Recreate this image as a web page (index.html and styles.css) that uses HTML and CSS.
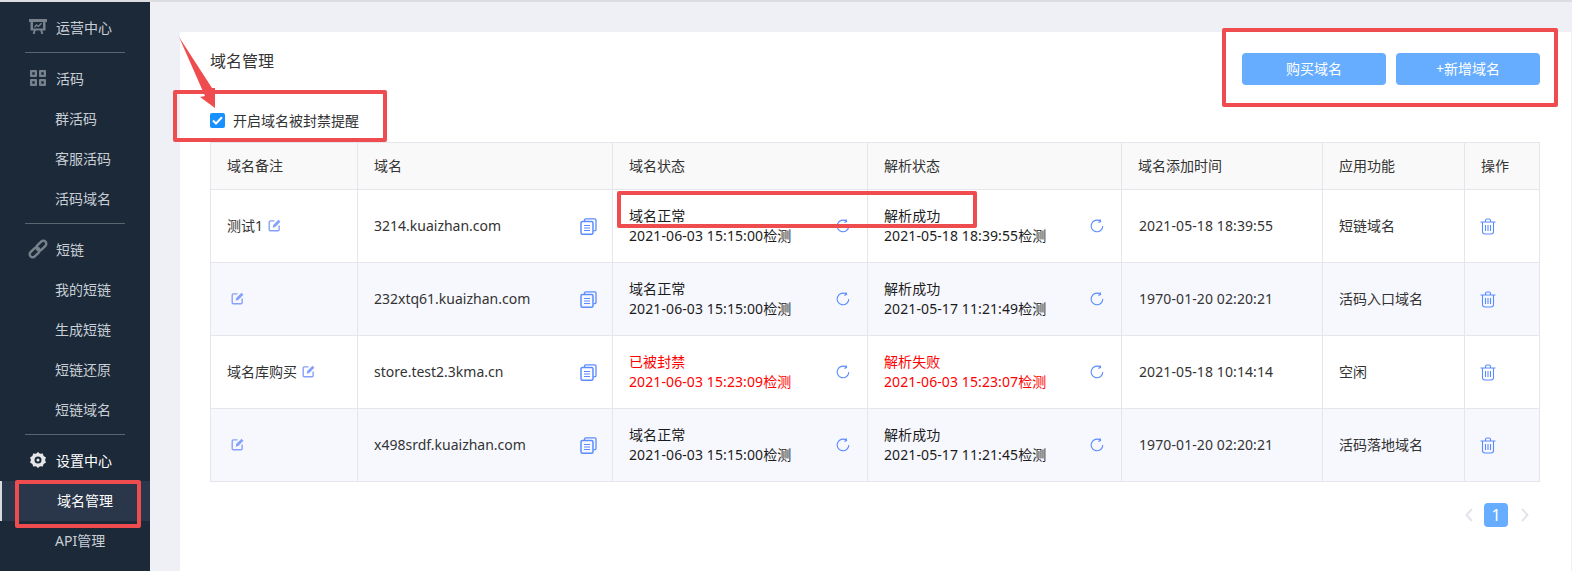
FILE: index.html
```html
<!DOCTYPE html>
<html lang="zh-CN">
<head>
<meta charset="utf-8">
<title>域名管理</title>
<link rel="stylesheet" href="styles.css">
</head>
<body>

<svg width="0" height="0" class="defs">
  <symbol id="i-edit" viewBox="0 0 14 14">
    <path d="M7 2H2.500A1.200 1.200 0 0 0 1.300 3.200V11.500A1.200 1.200 0 0 0 2.500 12.700H10.800A1.200 1.200 0 0 0 12 11.500V7" fill="none" stroke="currentColor" stroke-width="1.500"/>
    <path d="M5 9.300L5.600 6.400L11.300 .9L13.400 3L7.800 8.700Z" fill="currentColor"/>
  </symbol>
  <symbol id="i-copy" viewBox="0 0 17 17">
    <path d="M4.500 3V2A1.200 1.200 0 0 1 5.700 .8H14.800A1.200 1.200 0 0 1 16 2V11.500A1.200 1.200 0 0 1 14.800 12.700H13.500" fill="none" stroke="currentColor" stroke-width="1.300"/>
    <rect x="1" y="3.500" width="12" height="12.700" rx="1.500" fill="none" stroke="currentColor" stroke-width="1.500"/>
    <path d="M4 7.500H10M4 10H10M4 12.500H10" stroke="currentColor" stroke-width="1.200"/>
  </symbol>
  <symbol id="i-refresh" viewBox="0 0 14 14">
    <path d="M12.800 7A5.800 5.800 0 1 1 10.300 2.200" fill="none" stroke="currentColor" stroke-width="1.100"/>
    <path d="M9.800 .3L10.600 2.500L8.400 3.600" fill="none" stroke="currentColor" stroke-width="1.100"/>
  </symbol>
  <symbol id="i-trash" viewBox="0 0 16 17">
    <path d="M.5 4H15.500M5.500 4V2.500A1.500 1.500 0 0 1 7 1H9A1.500 1.500 0 0 1 10.500 2.500V4" fill="none" stroke="currentColor" stroke-width="1.100"/>
    <path d="M2.500 4V13.500A2.500 2.500 0 0 0 5 16H11A2.500 2.500 0 0 0 13.500 13.500V4" fill="none" stroke="currentColor" stroke-width="1.100"/>
    <path d="M5.500 7V13M8 7V13M10.500 7V13" stroke="currentColor" stroke-width="1.100"/>
  </symbol>
</svg>

<div class="topline"></div>

<div class="layout">
  <div class="sidebar">
    <div class="nav-head">
      <svg class="nav-icon" viewBox="0 0 16 16"><path d="M-1 0H17V3H15.500V11.500H12.300L13.300 15H11.300L10.300 11.500H5.700L4.700 15H2.700L3.700 11.500H.5V3H-1ZM3 3V9.500H13V3ZM4 8L6.300 5L8.300 6.500L11 3.800L12 4.800L8.500 8.300L6.600 6.900L5.200 8.800Z" fill-rule="evenodd"/></svg>
      运营中心
    </div>
    <div class="nav-line"></div>
    <div class="nav-head">
      <svg class="nav-icon" viewBox="0 0 16 16"><path d="M1 0H6A1 1 0 0 1 7 1V6A1 1 0 0 1 6 7H1A1 1 0 0 1 0 6V1A1 1 0 0 1 1 0ZM2.300 2.300V4.700H4.700V2.300ZM10 0H15A1 1 0 0 1 16 1V6A1 1 0 0 1 15 7H10A1 1 0 0 1 9 6V1A1 1 0 0 1 10 0ZM11.300 2.300V4.700H13.700V2.300ZM1 9H6A1 1 0 0 1 7 10V15A1 1 0 0 1 6 16H1A1 1 0 0 1 0 15V10A1 1 0 0 1 1 9ZM2.300 11.300V13.700H4.700V11.300ZM10 9H15A1 1 0 0 1 16 10V15A1 1 0 0 1 15 16H10A1 1 0 0 1 9 15V10A1 1 0 0 1 10 9ZM11.300 11.300V13.700H13.700V11.300Z" fill-rule="evenodd"/></svg>
      活码
    </div>
    <div class="nav-item">群活码</div>
    <div class="nav-item">客服活码</div>
    <div class="nav-item">活码域名</div>
    <div class="nav-line"></div>
    <div class="nav-head">
      <svg class="nav-icon" viewBox="0 0 16 16"><g transform="rotate(-45 8 8)" fill="none" stroke="#78828d" stroke-width="2.400"><rect x="-2.500" y="5" width="11.500" height="6" rx="3"/><rect x="7" y="5" width="11.500" height="6" rx="3"/></g></svg>
      短链
    </div>
    <div class="nav-item">我的短链</div>
    <div class="nav-item">生成短链</div>
    <div class="nav-item">短链还原</div>
    <div class="nav-item">短链域名</div>
    <div class="nav-line"></div>
    <div class="nav-head open">
      <svg class="nav-icon" viewBox="0 0 16 16"><path d="M8 0L10 1.800L12.800 1.400L13.600 4.100L16 5.500L15 8L16 10.500L13.600 11.900L12.800 14.600L10 14.200L8 16L6 14.200L3.200 14.600L2.400 11.900L0 10.500L1 8L0 5.500L2.400 4.100L3.200 1.400L6 1.800ZM8 4.500A3.500 3.500 0 1 0 8 11.500A3.500 3.500 0 1 0 8 4.500ZM8 6.500A1.500 1.500 0 1 1 8 9.500A1.500 1.500 0 1 1 8 6.500Z" fill-rule="evenodd"/></svg>
      设置中心
    </div>
    <div class="nav-item active">域名管理</div>
    <div class="nav-item">API管理</div>
  </div>

  <div class="main">
    <div class="card">
      <div class="card-head">
        <div class="title">域名管理</div>
        <div class="btns">
          <div class="btn">购买域名</div>
          <div class="btn">+新增域名</div>
        </div>
      </div>

      <div class="check-row">
        <span class="check"><svg width="11" height="9" viewBox="0 0 11 9"><path d="M1 4.500L4 7.500L10 1.300" fill="none" stroke="#fff" stroke-width="2"/></svg></span>
        开启域名被封禁提醒
      </div>

      <table class="domains">
        <colgroup>
          <col class="c-note"><col class="c-name"><col class="c-status"><col class="c-parse"><col class="c-time"><col class="c-use"><col class="c-op">
        </colgroup>
        <tr>
          <th>域名备注</th><th>域名</th><th>域名状态</th><th>解析状态</th><th>域名添加时间</th><th>应用功能</th><th>操作</th>
        </tr>
        <tr>
          <td>测试1<svg class="ico edit"><use href="#i-edit"/></svg></td>
          <td><div class="cell">3214.kuaizhan.com<svg class="ico copy"><use href="#i-copy"/></svg></div></td>
          <td><div class="cell"><div class="state">域名正常<br>2021-06-03 15:15:00检测</div><svg class="ico refresh"><use href="#i-refresh"/></svg></div></td>
          <td><div class="cell"><div class="state">解析成功<br>2021-05-18 18:39:55检测</div><svg class="ico refresh"><use href="#i-refresh"/></svg></div></td>
          <td class="date">2021-05-18 18:39:55</td>
          <td>短链域名</td>
          <td class="op"><svg class="ico trash"><use href="#i-trash"/></svg></td>
        </tr>
        <tr class="alt">
          <td><svg class="ico edit solo"><use href="#i-edit"/></svg></td>
          <td><div class="cell">232xtq61.kuaizhan.com<svg class="ico copy"><use href="#i-copy"/></svg></div></td>
          <td><div class="cell"><div class="state">域名正常<br>2021-06-03 15:15:00检测</div><svg class="ico refresh"><use href="#i-refresh"/></svg></div></td>
          <td><div class="cell"><div class="state">解析成功<br>2021-05-17 11:21:49检测</div><svg class="ico refresh"><use href="#i-refresh"/></svg></div></td>
          <td class="date">1970-01-20 02:20:21</td>
          <td>活码入口域名</td>
          <td class="op"><svg class="ico trash"><use href="#i-trash"/></svg></td>
        </tr>
        <tr>
          <td>域名库购买<svg class="ico edit"><use href="#i-edit"/></svg></td>
          <td><div class="cell">store.test2.3kma.cn<svg class="ico copy"><use href="#i-copy"/></svg></div></td>
          <td><div class="cell"><div class="state bad">已被封禁<br>2021-06-03 15:23:09检测</div><svg class="ico refresh"><use href="#i-refresh"/></svg></div></td>
          <td><div class="cell"><div class="state bad">解析失败<br>2021-06-03 15:23:07检测</div><svg class="ico refresh"><use href="#i-refresh"/></svg></div></td>
          <td class="date">2021-05-18 10:14:14</td>
          <td>空闲</td>
          <td class="op"><svg class="ico trash"><use href="#i-trash"/></svg></td>
        </tr>
        <tr class="alt">
          <td><svg class="ico edit solo"><use href="#i-edit"/></svg></td>
          <td><div class="cell">x498srdf.kuaizhan.com<svg class="ico copy"><use href="#i-copy"/></svg></div></td>
          <td><div class="cell"><div class="state">域名正常<br>2021-06-03 15:15:00检测</div><svg class="ico refresh"><use href="#i-refresh"/></svg></div></td>
          <td><div class="cell"><div class="state">解析成功<br>2021-05-17 11:21:45检测</div><svg class="ico refresh"><use href="#i-refresh"/></svg></div></td>
          <td class="date">1970-01-20 02:20:21</td>
          <td>活码落地域名</td>
          <td class="op"><svg class="ico trash"><use href="#i-trash"/></svg></td>
        </tr>
      </table>

      <div class="pager">
        <svg class="chev" viewBox="0 0 8 14"><path d="M7 1L1.500 7L7 13" fill="none" stroke="currentColor" stroke-width="2"/></svg>
        <div class="page-no">1</div>
        <svg class="chev" viewBox="0 0 8 14"><path d="M1 1L6.500 7L1 13" fill="none" stroke="currentColor" stroke-width="2"/></svg>
      </div>
    </div>
  </div>
</div>

<!-- red marks drawn over the screenshot -->
<div class="mark mark-check"></div>
<div class="mark mark-btns"></div>
<div class="mark mark-status"></div>
<div class="mark mark-nav"></div>
<svg class="arrow" viewBox="0 0 50 80"><path d="M1 1L34 52L37 52L37 72L22 61L27 60Z" fill="#ef4c4f"/></svg>

</body>
</html>
```

FILE: styles.css
```css
* {
  box-sizing: border-box;
}

html, body {
  height: 100%;
}

body {
  margin: 0;
  overflow: hidden;
  background: #eff0f5;
  color: #333;
  font-family: "Noto Sans", "Noto Sans CJK SC", sans-serif;
  font-size: 14px;
}

.defs {
  position: absolute;
}

.topline {
  height: 2px;
  background: #dcdde0;
}

.layout {
  display: flex;
  height: 569px;
}

/* sidebar */
.sidebar {
  width: 150px;
  flex: none;
  padding-top: 6px;
  background: #1c2938;
  color: #c8ced6;
}

.nav-head {
  display: flex;
  align-items: center;
  height: 40px;
  padding: 0 0 2px 30px;
}

.nav-head.open {
  color: #fff;
}

.nav-icon {
  width: 16px;
  height: 16px;
  margin-right: 10px;
  overflow: visible;
  fill: #78828d;
}

.open .nav-icon {
  fill: #e4e6e9;
}

.nav-line {
  height: 1px;
  margin: 4px 25px 6px;
  background: #5b6570;
}

.nav-item {
  height: 40px;
  line-height: 40px;
  padding-left: 55px;
}

.nav-item.active {
  border-left: 2px solid #d9dadc;
  background: #2a3649;
  color: #fff;
}

/* main */
.main {
  flex: 1;
  padding: 30px 2px 0 30px;
}

.card {
  height: 100%;
  padding: 21px 31px 0 30px;
  background: #fff;
}

.card-head {
  display: flex;
  justify-content: space-between;
  align-items: flex-start;
}

.title {
  font-size: 16px;
  line-height: 16px;
}

.btns {
  display: flex;
  gap: 10px;
}

.btn {
  width: 144px;
  height: 32px;
  line-height: 32px;
  border-radius: 4px;
  background: #66adff;
  color: #fff;
  text-align: center;
}

.check-row {
  display: flex;
  align-items: center;
  height: 20px;
  margin: 25px 0 12px;
}

.check {
  display: flex;
  align-items: center;
  justify-content: center;
  width: 15px;
  height: 15px;
  margin-right: 8px;
  border-radius: 2px;
  background: #1890ff;
}

/* table */
.domains {
  width: 1329px;
  table-layout: fixed;
  border-collapse: collapse;
}

.c-note { width: 147px; }
.c-name { width: 255px; }
.c-status { width: 255px; }
.c-parse { width: 254px; }
.c-time { width: 201px; }
.c-use { width: 142px; }
.c-op { width: 75px; }

.domains th,
.domains td {
  border: 1px solid #e5e6eb;
  padding: 0 16px;
  text-align: left;
  line-height: 20px;
}

.domains th {
  height: 47px;
  background: #f9f9f9;
  font-weight: normal;
}

.domains td {
  height: 73px;
}

.alt td {
  background: #f7f8fe;
}

.cell {
  display: flex;
  align-items: center;
  justify-content: space-between;
}

.state {
  color: #1c1c1c;
  letter-spacing: .1px;
}

.state.bad {
  color: #f00;
}

.domains td.date {
  padding-left: 17px;
  letter-spacing: .1px;
}

.ico {
  color: #5b8cff;
}

.edit {
  width: 13px;
  height: 13px;
  margin-left: 5px;
  color: #86a0fb;
  vertical-align: -1px;
}

.edit.solo {
  margin-left: 4px;
}

.copy {
  width: 17px;
  height: 17px;
  flex: none;
  margin-right: -1px;
}

.refresh {
  width: 14px;
  height: 14px;
  flex: none;
  margin-right: 1px;
}

.trash {
  display: block;
  width: 16px;
  height: 17px;
}

.domains td.op {
  padding-left: 15px;
}

/* pager */
.pager {
  display: flex;
  justify-content: flex-end;
  align-items: center;
  gap: 11px;
  margin-top: 21px;
  padding-right: 11px;
  color: #e3e4ea;
}

.chev {
  width: 8px;
  height: 14px;
}

.page-no {
  width: 24px;
  height: 24px;
  margin-right: 2px;
  line-height: 24px;
  border-radius: 4px;
  background: #66adff;
  color: #fff;
  font-size: 16px;
  text-align: center;
}

/* annotations */
.mark {
  position: absolute;
  border: 4px solid #ef4c4f;
  border-radius: 2px;
}

.mark-check {
  left: 173px;
  top: 90px;
  width: 214px;
  height: 52px;
}

.mark-btns {
  left: 1222px;
  top: 28px;
  width: 336px;
  height: 79px;
}

.mark-status {
  left: 617px;
  top: 191px;
  width: 360px;
  height: 37px;
}

.mark-nav {
  left: 15px;
  top: 480px;
  width: 126px;
  height: 48px;
}

.arrow {
  position: absolute;
  left: 178px;
  top: 36px;
  width: 50px;
  height: 80px;
}
```
